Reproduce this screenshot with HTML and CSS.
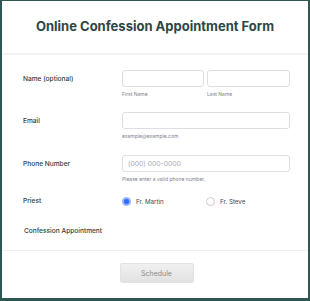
FILE: index.html
```html
<!DOCTYPE html>
<html>
<head>
<meta charset="utf-8">
<link rel="stylesheet" href="styles.css">
</head>
<body>
<div class="card">
  <div class="header">
    <h1 class="title">Online Confession Appointment Form</h1>
  </div>
  <div class="form">
    <div class="row row-name">
      <div class="label">Name (optional)</div>
      <div class="field">
        <div class="pair">
          <div class="col">
            <div class="input"></div>
            <div class="sub">First Name</div>
          </div>
          <div class="col">
            <div class="input"></div>
            <div class="sub">Last Name</div>
          </div>
        </div>
      </div>
    </div>
    <div class="row row-email">
      <div class="label">Email</div>
      <div class="field">
        <div class="input"></div>
        <div class="sub">example@example.com</div>
      </div>
    </div>
    <div class="row row-phone">
      <div class="label">Phone Number</div>
      <div class="field">
        <div class="input"><span class="ph">(000) 000-0000</span></div>
        <div class="sub">Please enter a valid phone number.</div>
      </div>
    </div>
    <div class="row row-priest">
      <div class="label">Priest</div>
      <div class="field radios">
        <div class="radio-opt"><span class="radio checked"></span><span class="rlabel">Fr. Martin</span></div>
        <div class="radio-opt"><span class="radio"></span><span class="rlabel">Fr. Steve</span></div>
      </div>
    </div>
    <div class="row row-appt">
      <div class="label label-appt">Confession Appointment</div>
    </div>
  </div>
  <div class="footer">
    <button class="btn">Schedule</button>
  </div>
</div>
</body>
</html>
```
FILE: styles.css
```css
* { box-sizing: border-box; }
html, body { margin: 0; padding: 0; }
body {
  background: #2f5752;
  width: 310px;
  height: 301px;
  padding: 1px 2px 3px 2px;
  font-family: Inter, "Noto Sans", sans-serif;
}
.card {
  background: #ffffff;
  height: 297px;
  display: flex;
  flex-direction: column;
}
.header {
  height: 54px;
  border-bottom: 2px solid #f3f3f5;
  display: flex;
  align-items: center;
  justify-content: center;
  padding-bottom: 2px;
}
.title {
  margin: 0;
  font-size: 13px;
  font-weight: 700;
  color: #2e4644;
}
.form {
  padding: 15px 0 0 21px;
  height: 196px;
  border-bottom: 1px solid #efeff1;
}
.row {
  display: grid;
  grid-template-columns: 99px 168px;
}
.label {
  font-size: 6.6px;
  font-weight: 500;
  color: #2e3d47;
  line-height: 17px;
  padding-top: 1px;
}
.pair {
  display: grid;
  grid-template-columns: 82px 83px;
  column-gap: 3px;
}
.input {
  height: 17px;
  border: 1px solid #dcdee4;
  border-radius: 3px;
  background: #fff;
  display: flex;
  align-items: center;
  padding-left: 5px;
}
.ph {
  font-size: 6.8px;
  color: #a7abb6;
}
.sub {
  font-size: 5px;
  color: #7d8290;
  line-height: 8px;
  margin-top: 3px;
}
.row-email { margin-top: 14px; }
.row-phone { margin-top: 15px; }
.row-priest { margin-top: 10px; }
.row-priest .label { line-height: 16px; padding-top: 0; }
.radios {
  display: grid;
  grid-template-columns: 84px 84px;
  align-items: center;
  height: 16px;
}
.radio-opt {
  display: flex;
  align-items: center;
}
.radio {
  width: 9px;
  height: 9px;
  border-radius: 50%;
  border: 1px solid #c9ccd3;
  background: #fff;
  margin-right: 5px;
  flex: none;
}
.radio.checked {
  border: 1px solid #a9c0ff;
  background: #2e6bf5;
  box-shadow: inset 0 0 0 1px #8fb0ff;
}
.rlabel {
  font-size: 6.2px;
  color: #3c4656;
}
.row-appt { margin-top: 13px; }
.label-appt {
  padding-left: 1px;
  line-height: 16px;
  white-space: nowrap;
}
.footer {
  display: flex;
  justify-content: center;
  padding-top: 12px;
  padding-left: 3px;
}
.btn {
  width: 74px;
  height: 20px;
  border: 1px solid #e3e3e3;
  border-radius: 2px;
  background: linear-gradient(#f0f0f0, #e2e2e2);
  font-family: Inter, "Noto Sans", sans-serif;
  font-size: 7px;
  color: #8a8a8a;
  padding: 0;
}
```
